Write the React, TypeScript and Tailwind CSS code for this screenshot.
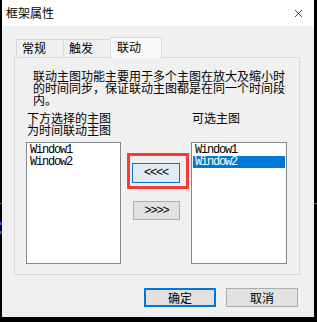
import { X } from "lucide-react";

const cjk = "font-['Noto_Sans_CJK_SC',sans-serif]";
const mono = "font-['Liberation_Mono',monospace]";

const tabs = [
  { id: "general", label: "常规" },
  { id: "trigger", label: "触发" },
];

function ListBox({ items, selected }: { items: string[]; selected?: number }) {
  return (
    <div className="h-[122px] border border-[#828790] bg-white p-px">
      {items.map((item, i) => (
        <div
          key={item}
          className={
            "h-[12px] px-[2px] text-[12px] leading-[12px] tracking-[-1.2px] " +
            mono +
            (i === selected ? " bg-[#0078d7] text-white" : " text-black")
          }
        >
          {item}
        </div>
      ))}
    </div>
  );
}

export default function App() {
  return (
    <div className={"relative h-[322px] w-[317px] overflow-hidden bg-black " + cjk}>
      {/* bits of the window behind */}
      <div className="absolute left-0 top-[203px] h-px w-full bg-[#d83a3a]" />
      <div className="absolute left-0 top-[222px] h-[3px] w-[2px] bg-[#2a4dff]" />
      <div className="absolute left-0 top-[231px] h-[3px] w-[2px] bg-[#2a4dff]" />

      <div className="relative ml-[2px] flex h-[317px] w-[312px] flex-col bg-[#f0f0f0]">
        {/* Title bar */}
        <div className="flex h-[26px] shrink-0 items-center justify-between bg-white pl-[4px] pr-[9px]">
          <span className="text-[12px] leading-[12px] text-black">框架属性</span>
          <X className="size-[13px] text-black" strokeWidth={1.3} />
        </div>

        {/* Tabs */}
        <div className="ml-[12px] mt-[11px] w-[286px]">
          <div className="flex h-[20px] items-end pl-[2px]">
            {tabs.map((t, i) => (
              <div
                key={t.id}
                className={
                  "h-[18px] border-t border-r border-[#d9d9d9] pl-[5px] pt-[2px] text-[12px] leading-[12px] text-black " +
                  (i === 0 ? "w-[48px] border-l" : "w-[47px]")
                }
              >
                {t.label}
              </div>
            ))}
            <div className="relative z-10 -mb-px -ml-px h-[21px] w-[52px] border-x border-t border-[#d9d9d9] bg-[#f9f9f9] pl-[6px] pt-[3px] text-[12px] leading-[12px] text-black">
              联动
            </div>
          </div>

          {/* Panel */}
          <div className="h-[218px] border border-[#d9d9d9] bg-[#f0f0f0] pl-[11px] pt-[12px]">
            <p className="ml-[7px] w-[256px] text-[12px] leading-[12px] text-black">
              联动主图功能主要用于多个主图在放大及缩小时的时间同步，保证联动主图都是在同一个时间段内。
            </p>

            <div className="mt-[6px] flex">
              <div className="w-[95px]">
                <div className="h-[30px] pl-px text-[12px] leading-[12px] text-black">
                  下方选择的主图
                  <br />
                  为时间联动主图
                </div>
                <ListBox items={["Window1", "Window2"]} />
              </div>

              <div className="w-[70px] pt-[51px]">
                <div className="relative ml-[11px] w-[48px]">
                  <button
                    className={
                      "flex h-[20px] w-[48px] items-center justify-center border border-[#0078d7] bg-[#e3ebf2] text-[12px] leading-[12px] tracking-[-1.2px] text-black " +
                      mono
                    }
                  >
                    &lt;&lt;&lt;&lt;
                  </button>
                  <div className="pointer-events-none absolute -left-[5px] -right-[9px] -top-[10px] -bottom-[6px] border-[3px] border-[#f23b3b]" />
                </div>
                <button
                  className={
                    "ml-[12px] mt-[18px] flex h-[19px] w-[47px] items-center justify-center border border-[#adadad] bg-[#e1e1e1] text-[12px] leading-[12px] tracking-[-1.2px] text-black " +
                    mono
                  }
                >
                  &gt;&gt;&gt;&gt;
                </button>
              </div>

              <div className="w-[96px]">
                <div className="h-[30px] pl-px text-[12px] leading-[12px] text-black">
                  可选主图
                </div>
                <ListBox items={["Window1", "Window2"]} selected={1} />
              </div>
            </div>
          </div>
        </div>

        {/* Footer buttons */}
        <div className="mt-[13px] flex justify-end gap-[10px] pr-[16px]">
          <button className="flex h-[19px] w-[72px] items-center justify-center border-2 border-[#0078d7] bg-[#e1e1e1] text-[12px] leading-[12px] text-black">
            确定
          </button>
          <button className="flex h-[19px] w-[72px] items-center justify-center border border-[#adadad] bg-[#e1e1e1] text-[12px] leading-[12px] text-black">
            取消
          </button>
        </div>
      </div>
    </div>
  );
}
